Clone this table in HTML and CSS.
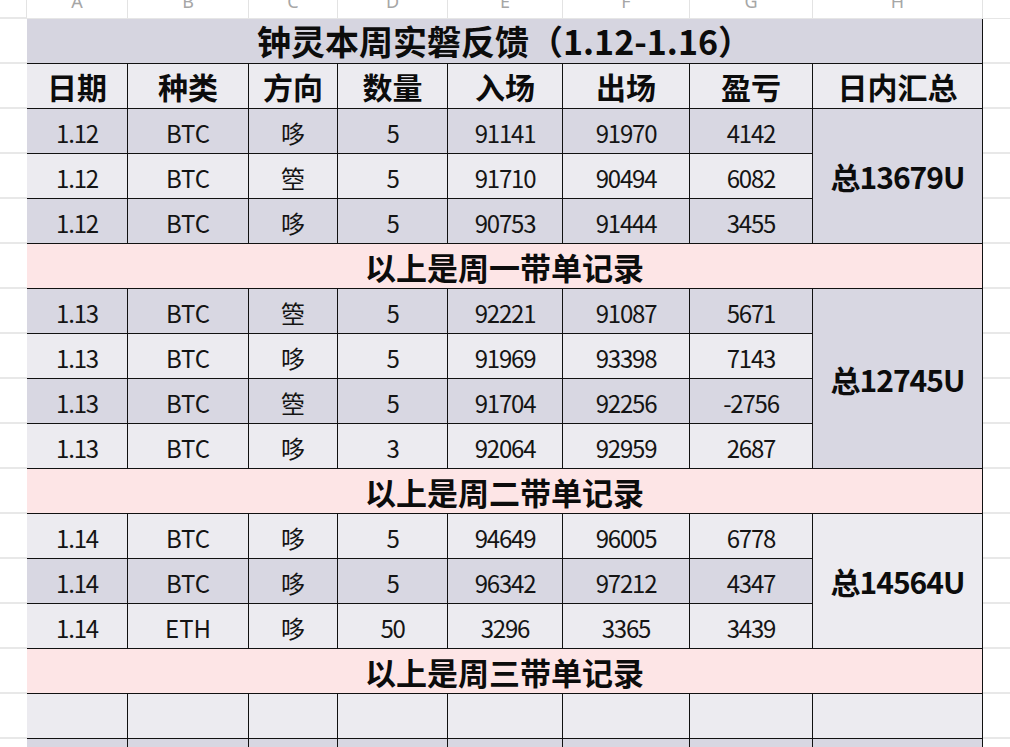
FILE: index.html
```html
<!DOCTYPE html>
<html lang="zh-CN">
<head>
<meta charset="utf-8">
<title>钟灵本周实磐反馈</title>
<link rel="stylesheet" href="styles.css">
</head>
<body>
<div class="sheet">
  <!-- column letters -->
  <div class="g lt"></div>
  <div class="lt"><span>A</span></div>
  <div class="lt"><span>B</span></div>
  <div class="lt"><span>C</span></div>
  <div class="lt"><span>D</span></div>
  <div class="lt"><span>E</span></div>
  <div class="lt"><span>F</span></div>
  <div class="lt"><span>G</span></div>
  <div class="lt"><span>H</span></div>
  <div class="lt last"></div>

  <!-- title -->
  <div class="g"></div>
  <div class="c title span8">钟灵本周实磐反馈（1.12-1.16）</div>
  <div class="g"></div>

  <!-- header -->
  <div class="g"></div>
  <div class="c hd light">日期</div>
  <div class="c hd light">种类</div>
  <div class="c hd light">方向</div>
  <div class="c hd light">数量</div>
  <div class="c hd light">入场</div>
  <div class="c hd light">出场</div>
  <div class="c hd light">盈亏</div>
  <div class="c hd light">日内汇总</div>
  <div class="g"></div>

  <!-- 1.12 -->
  <div class="g"></div>
  <div class="c dark num">1.12</div><div class="c dark">BTC</div><div class="c dark">哆</div><div class="c dark num">5</div><div class="c dark num">91141</div><div class="c dark num">91970</div><div class="c dark num">4142</div>
  <div class="c dark sum r3">总13679U</div>
  <div class="g"></div>
  <div class="g"></div>
  <div class="c light num">1.12</div><div class="c light">BTC</div><div class="c light">箜</div><div class="c light num">5</div><div class="c light num">91710</div><div class="c light num">90494</div><div class="c light num">6082</div>
  <div class="g"></div>
  <div class="g"></div>
  <div class="c dark num">1.12</div><div class="c dark">BTC</div><div class="c dark">哆</div><div class="c dark num">5</div><div class="c dark num">90753</div><div class="c dark num">91444</div><div class="c dark num">3455</div>
  <div class="g"></div>

  <div class="g"></div>
  <div class="c label span8">以上是周一带单记录</div>
  <div class="g"></div>

  <!-- 1.13 -->
  <div class="g"></div>
  <div class="c dark num">1.13</div><div class="c dark">BTC</div><div class="c dark">箜</div><div class="c dark num">5</div><div class="c dark num">92221</div><div class="c dark num">91087</div><div class="c dark num">5671</div>
  <div class="c dark sum r4">总12745U</div>
  <div class="g"></div>
  <div class="g"></div>
  <div class="c light num">1.13</div><div class="c light">BTC</div><div class="c light">哆</div><div class="c light num">5</div><div class="c light num">91969</div><div class="c light num">93398</div><div class="c light num">7143</div>
  <div class="g"></div>
  <div class="g"></div>
  <div class="c dark num">1.13</div><div class="c dark">BTC</div><div class="c dark">箜</div><div class="c dark num">5</div><div class="c dark num">91704</div><div class="c dark num">92256</div><div class="c dark num">-2756</div>
  <div class="g"></div>
  <div class="g"></div>
  <div class="c light num">1.13</div><div class="c light">BTC</div><div class="c light">哆</div><div class="c light num">3</div><div class="c light num">92064</div><div class="c light num">92959</div><div class="c light num">2687</div>
  <div class="g"></div>

  <div class="g"></div>
  <div class="c label span8">以上是周二带单记录</div>
  <div class="g"></div>

  <!-- 1.14 -->
  <div class="g"></div>
  <div class="c light num">1.14</div><div class="c light">BTC</div><div class="c light">哆</div><div class="c light num">5</div><div class="c light num">94649</div><div class="c light num">96005</div><div class="c light num">6778</div>
  <div class="c light sum r3">总14564U</div>
  <div class="g"></div>
  <div class="g"></div>
  <div class="c dark num">1.14</div><div class="c dark">BTC</div><div class="c dark">哆</div><div class="c dark num">5</div><div class="c dark num">96342</div><div class="c dark num">97212</div><div class="c dark num">4347</div>
  <div class="g"></div>
  <div class="g"></div>
  <div class="c light num">1.14</div><div class="c light">ETH</div><div class="c light">哆</div><div class="c light num">50</div><div class="c light num">3296</div><div class="c light num">3365</div><div class="c light num">3439</div>
  <div class="g"></div>

  <div class="g"></div>
  <div class="c label span8">以上是周三带单记录</div>
  <div class="g"></div>

  <!-- empty rows -->
  <div class="g"></div>
  <div class="c light"></div><div class="c light"></div><div class="c light"></div><div class="c light"></div><div class="c light"></div><div class="c light"></div><div class="c light"></div><div class="c light"></div>
  <div class="g"></div>
  <div class="g"></div>
  <div class="c dark"></div><div class="c dark"></div><div class="c dark"></div><div class="c dark"></div><div class="c dark"></div><div class="c dark"></div><div class="c dark"></div><div class="c dark"></div>
  <div class="g"></div>
</div>
</body>
</html>
```
FILE: styles.css
```css
html, body {
  margin: 0;
  padding: 0;
  background: #ffffff;
  overflow: hidden;
}

.sheet {
  display: grid;
  grid-template-columns: 27px 101px 121px 89px 110px 115px 127px 123px 170px 1fr;
  grid-template-rows: 19px;
  grid-auto-rows: 45px;
  width: 1010px;
  font-family: "Noto Sans CJK SC", "Noto Sans", sans-serif;
  color: #141414;
}

.lt {
  box-sizing: border-box;
  overflow: hidden;
  display: flex;
  justify-content: center;
  align-items: flex-start;
  border-right: 1px solid #e3e3e3;
  border-bottom: 1px solid #e6e6e6;
  font-family: "Noto Sans", sans-serif;
  font-size: 18px;
  color: #a6a6a6;
}
.lt span {
  line-height: 20px;
  margin-top: -9px;
}
.lt.last {
  border-right: none;
}

.g {
  box-sizing: border-box;
  border-bottom: 2px solid #e8e8e8;
  background: #ffffff;
}

.c {
  box-sizing: border-box;
  display: flex;
  align-items: center;
  justify-content: center;
  border-right: 1px solid #111;
  border-bottom: 1px solid #111;
  font-size: 24px;
  font-weight: 400;
  line-height: 1;
  padding-top: 3px;
  white-space: nowrap;
}

.dark { background: #d8d7e2; }
.light { background: #ecebf0; }

.num { letter-spacing: -1.2px; }

.span8 { grid-column: span 8; }
.r3 { grid-row: span 3; }
.r4 { grid-row: span 4; }

.title {
  background: #d6d5e0;
  font-size: 34px;
  font-weight: 700;
  color: #0c0c0c;
  padding-top: 0;
}

.hd {
  font-size: 30px;
  font-weight: 700;
  color: #0c0c0c;
  padding-top: 0;
}

.label {
  background: #fde5e6;
  font-size: 31px;
  font-weight: 700;
  color: #0c0c0c;
  padding-top: 0;
}

.sum {
  font-size: 30px;
  font-weight: 700;
  letter-spacing: -1px;
  color: #0c0c0c;
  padding-top: 0;
}
```
